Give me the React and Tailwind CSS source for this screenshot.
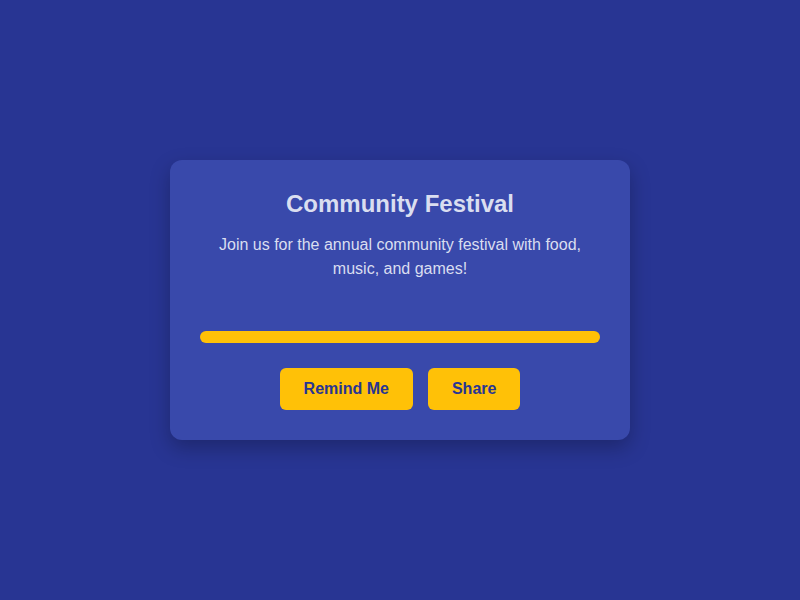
import React from 'react';

const App = () => {
  return (
    <div
      className="min-h-screen w-full bg-[#283593] flex items-center justify-center"
      style={{ fontFamily: '"Liberation Sans", Arial, sans-serif' }}
    >
      <div className="w-[460px] bg-[#3949ab] rounded-xl p-[30px] text-center text-[#dadef0] shadow-[0_8px_20px_rgba(0,0,0,0.25)]">
        {/* Header */}
        <h1 className="text-[24px] leading-[28px] font-bold">Community Festival</h1>
        <p className="mt-[15px] text-[16px] leading-[24px]">
          Join us for the annual community festival with food, music, and games!
        </p>

        {/* Progress */}
        <div className="mt-[50px] h-[12px] w-full rounded-full bg-[#ffc107]" />

        {/* Actions */}
        <div className="mt-[25px] flex items-center justify-center gap-[15px]">
          <button className="h-[42px] px-[24px] rounded-md bg-[#ffc107] text-[#283593] text-[16px] font-bold">
            Remind Me
          </button>
          <button className="h-[42px] px-[24px] rounded-md bg-[#ffc107] text-[#283593] text-[16px] font-bold">
            Share
          </button>
        </div>
      </div>
    </div>
  );
};

export default App;
